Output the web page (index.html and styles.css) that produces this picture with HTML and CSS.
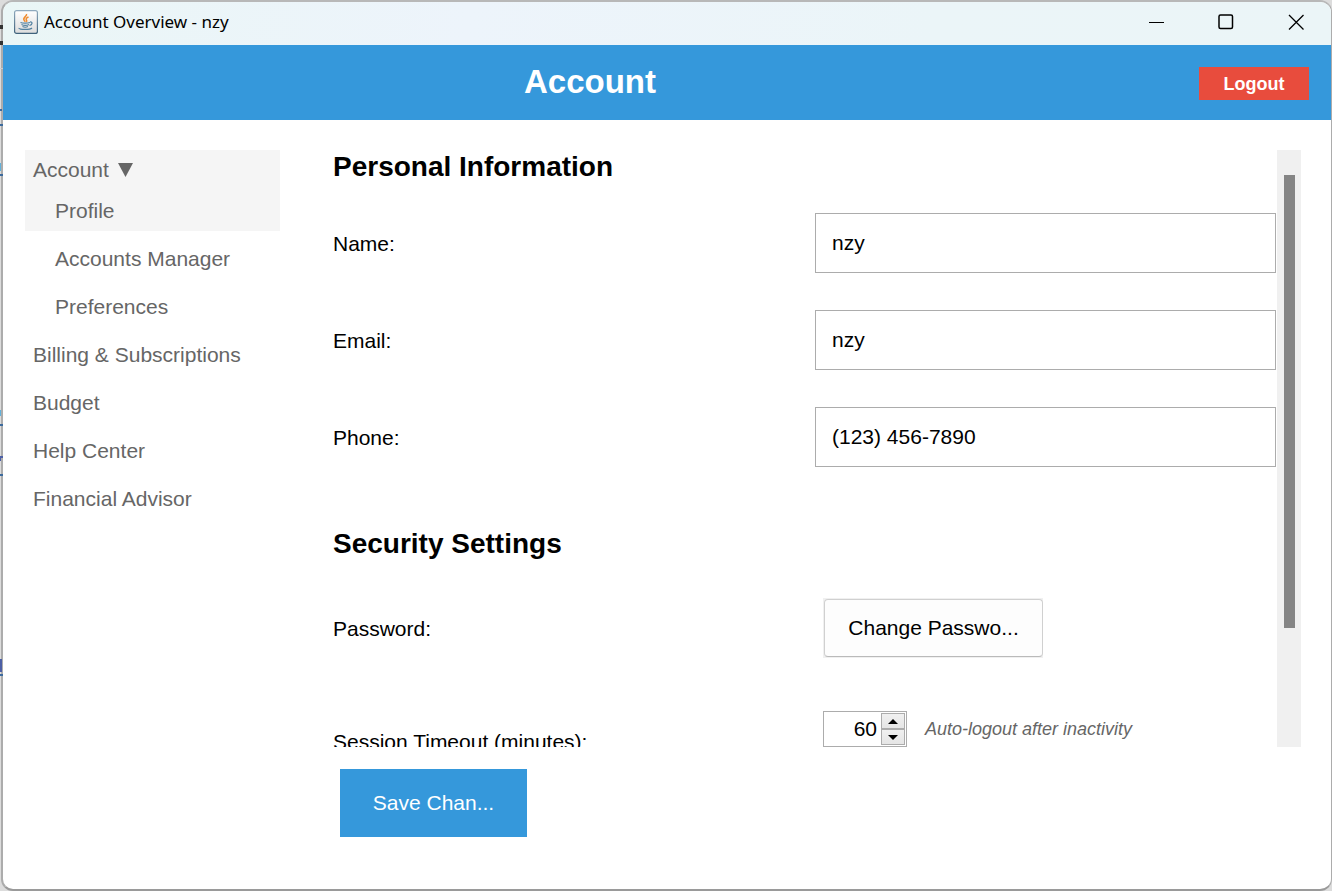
FILE: index.html
```html
<!DOCTYPE html>
<html lang="en">
<head>
<meta charset="utf-8">
<title>Account Overview - nzy</title>
<link rel="stylesheet" href="styles.css">
</head>
<body>
<svg class="backdrop" width="3" height="700" aria-hidden="true">
  <path d="M0 25h3v4H0zM0 41h3v4H0z" fill="#333"/>
  <path d="M0 68h3v1H0z" fill="#ccc"/>
  <path d="M0 109h2v2H0zM0 124h3v2H0zM0 174h3v2H0zM0 424h3v2H0zM0 474h3v2H0zM0 674h3v2H0z" fill="#3d6b9e"/>
  <path d="M0 163h1v8H0zM0 410h1v6H0z" fill="#62b2dc"/>
  <path d="M0 456h3v2H1v3H0zM0 659h2v13H0z" fill="#4c5fa5"/>
</svg>
<div class="window">
  <div class="titlebar">
    <svg class="app-icon" viewBox="0 0 24 24" aria-hidden="true">
      <defs>
        <linearGradient id="tile" x1="0" y1="0" x2="0" y2="1"><stop offset="0" stop-color="#fff"/><stop offset="1" stop-color="#dcdcdc"/></linearGradient>
        <linearGradient id="edge" x1="0" y1="0" x2="0" y2="1"><stop offset="0" stop-color="#8fa9bd"/><stop offset="1" stop-color="#3f627c"/></linearGradient>
      </defs>
      <rect x=".6" y=".6" width="22.800" height="22.800" rx="2" fill="url(#tile)" stroke="url(#edge)" stroke-width="1.200"/>
      <path d="M12.500 4c1 2-4 3.500-2.500 6 .5.900 1 1.200 1.200 1.800M14.500 7c-2 .8-3 2-2 3.200.6.800.3 1.200-.2 1.700" fill="none" stroke="#ef8a2c" stroke-width="1.500"/>
      <path d="M6.500 12.500c2 .9 7 .9 9.500 0M7.500 14.500c2 1 5.500 1 7.500 0M8.500 16.500c1.500.8 4 .8 5.500 0M16 12c3-.5 2.500 2.800-.5 3.500M5 18c-.5 1.800 11 2 13 0" fill="none" stroke="#5382a1" stroke-width="1.200"/>
    </svg>
    <span class="window-title">Account Overview - nzy</span>
    <div class="window-controls">
      <button type="button" class="win-btn" aria-label="Minimize"><svg width="16" height="16"><path d="M1 8.500h15" stroke="#000"/></svg></button>
      <button type="button" class="win-btn" aria-label="Maximize"><svg width="16" height="16"><rect x="1" y="1" width="13.500" height="13.500" rx="1.500" fill="none" stroke="#000" stroke-width="1.500"/></svg></button>
      <button type="button" class="win-btn" aria-label="Close"><svg width="16" height="16"><path d="M1 1l14.500 14.500M15.500 1L1 15.500" stroke="#000" stroke-width="1.300"/></svg></button>
    </div>
  </div>
  <header class="header">
    <h1 class="page-title">Account</h1>
    <button type="button" class="logout">Logout</button>
  </header>
  <div class="body">
    <nav class="sidebar">
      <div class="nav-active">
        <a class="nav-link nav-parent" href="#">Account <svg width="15" height="14" aria-hidden="true"><path d="M0 0h15L7.500 14z" fill="#666"/></svg></a>
        <a class="nav-link nav-sub nav-current" href="#">Profile</a>
      </div>
      <a class="nav-link nav-sub" href="#">Accounts Manager</a>
      <a class="nav-link nav-sub" href="#">Preferences</a>
      <a class="nav-link" href="#">Billing &amp; Subscriptions</a>
      <a class="nav-link" href="#">Budget</a>
      <a class="nav-link" href="#">Help Center</a>
      <a class="nav-link" href="#">Financial Advisor</a>
    </nav>
    <main class="main">
      <div class="scroll-area">
        <form class="form">
          <h2 class="section-title">Personal Information</h2>
          <div class="rows">
            <div class="row"><label class="label" for="name">Name:</label><input class="field" id="name" type="text" value="nzy"></div>
            <div class="row"><label class="label" for="email">Email:</label><input class="field" id="email" type="text" value="nzy"></div>
            <div class="row"><label class="label" for="phone">Phone:</label><input class="field" id="phone" type="text" value="(123) 456-7890"></div>
          </div>
          <h2 class="section-title section-next">Security Settings</h2>
          <div class="rows rows-wide">
            <div class="row"><span class="label">Password:</span><div class="cell"><div class="button-well"><button type="button" class="change">Change Passwo...</button></div></div></div>
            <div class="row">
              <label class="label" for="timeout">Session Timeout (minutes):</label>
              <div class="cell">
                <div class="spinner">
                  <input id="timeout" class="spinner-input" type="text" inputmode="numeric" value="60">
                  <div class="spinner-buttons">
                    <button type="button" class="step" aria-label="Increase"><svg width="10" height="5"><path d="M0 5L5 0l5 5z"/></svg></button>
                    <button type="button" class="step" aria-label="Decrease"><svg width="10" height="5"><path d="M0 0l5 5 5-5z"/></svg></button>
                  </div>
                </div>
                <span class="hint">Auto-logout after inactivity</span>
              </div>
            </div>
          </div>
        </form>
        <div class="scrollbar" aria-hidden="true"><div class="thumb"></div></div>
      </div>
      <div class="actions"><button type="button" class="save">Save Chan...</button></div>
    </main>
  </div>
</div>
</body>
</html>
```
FILE: styles.css
```css
* { box-sizing: border-box; }

body {
  margin: 0;
  background: #dcdcdc;
  color: #000;
  font: 21px/24px "Liberation Sans", Arial, sans-serif;
}

button, input { font: inherit; color: inherit; border-radius: 0; }
button { padding: 0; border: 0; }

.backdrop { position: absolute; left: 0; top: 0; }

.window {
  display: flex;
  flex-direction: column;
  height: 100vh;
  margin-left: 1px;
  border: 2px solid #acacac;
  border-top-color: #b8b8b8;
  border-right-width: 1px;
  border-bottom-color: #9a9a9a;
  border-radius: 12px;
  background: #fff;
  overflow: hidden;
}

.titlebar {
  display: flex;
  align-items: center;
  height: 43px;
  padding: 0 0 4px 11px;
  background: linear-gradient(100deg, #eaf6f6, #edf4fb 35%, #ebf5f8 70%, #ebf5f7);
}
.app-icon { width: 24px; height: 24px; margin-right: 6px; }
.window-title { font: 17px/24px "Noto Sans", sans-serif; }
.window-controls { display: flex; margin-left: auto; }
.win-btn {
  display: grid;
  place-items: center;
  width: 70px;
  height: 39px;
  background: none;
}

.header {
  display: flex;
  align-items: center;
  height: 75px;
  padding: 2px 22px 0 0;
  background: #3598db;
  color: #fff;
}
.page-title { flex: 1; margin: 0; padding: 0 22px 4px 0; font-size: 33px; line-height: 40px; text-align: center; }
.logout { width: 110px; height: 33px; background: #e84c3d; font-size: 18px; font-weight: bold; }

.body { display: flex; flex: 1; min-height: 0; padding: 30px 30px 0 22px; }

.sidebar { width: 255px; margin-right: 53px; flex-shrink: 0; }
.nav-active { background: #f5f5f5; }
.nav-link {
  display: flex;
  align-items: center;
  gap: 9px;
  height: 48px;
  padding: 16px 8px 8px;
  color: #666;
  text-decoration: none;
}
.nav-parent { height: 40px; padding-top: 8px; }
.nav-sub { padding-left: 30px; }
.nav-current { height: 41px; padding-top: 8px; }

.main { display: flex; flex: 1; flex-direction: column; min-width: 0; }
.scroll-area { display: flex; flex: 1; gap: 1px; min-height: 0; overflow: hidden; }
.form { flex: 1; min-width: 0; overflow: hidden; }
.section-title { margin: 0; font-size: 28px; line-height: 34px; }
.section-next { margin-top: 60px; }
.rows { display: grid; gap: 37px; margin-top: 29px; }
.rows-wide { gap: 53px; margin-top: 37px; }
.row { display: grid; grid-template-columns: 482fr 461fr; align-items: center; height: 60px; }
.label { padding-top: 2px; }
.field { width: 100%; height: 60px; padding: 0 16px; border: 1px solid #acacac; background: #fff; }
.cell { display: flex; align-self: start; padding-left: 8px; }
.button-well { width: 220px; padding: 1px 0 1px 1px; background: #f0f0f0; }
.change {
  width: 100%;
  height: 58px;
  border: 1px solid #d0d0d0;
  border-bottom-color: #bababa;
  border-radius: 4px;
  background: #fdfdfd;
}
.spinner { display: flex; width: 84px; height: 36px; padding: 1px; border: 1px solid #acacac; }
.spinner-input { flex: 1; min-width: 0; padding: 0 4px 0 0; border: 0; text-align: right; }
.spinner-buttons { display: grid; width: 24px; }
.step { display: grid; place-items: center; border: 1px solid #acacac; background: linear-gradient(#f0f0f0, #e5e5e5); }
.hint { margin-left: 18px; color: #666; font-size: 18px; line-height: 36px; font-style: italic; }

.scrollbar { width: 24px; padding: 25px 6px 119px 7px; background: #f0f0f0; }
.thumb { height: 100%; background: #858585; }

.actions { padding: 22px 7px 52px; }
.save { width: 187px; height: 68px; background: #3598db; color: #fff; }
```
